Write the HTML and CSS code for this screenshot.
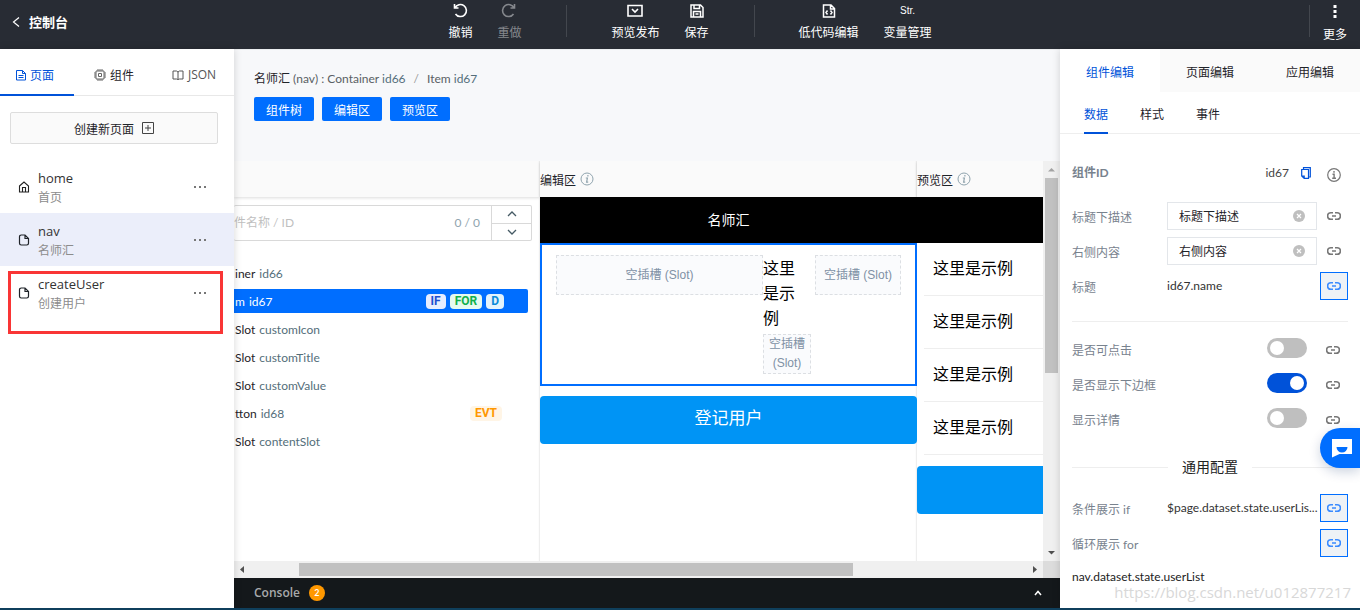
FILE: index.html
```html
<!DOCTYPE html>
<html lang="zh-CN">
<head>
<meta charset="utf-8">
<title>控制台</title>
<link rel="stylesheet" href="styles.css">
</head>
<body>
<svg class="defs" aria-hidden="true">
  <symbol id="link" viewBox="0 0 14 14"><path d="M6 3.800H3.800a3.200 3.200 0 0 0 0 6.400H6M8 3.800h2.200a3.200 3.200 0 0 1 0 6.400H8M5 7h4" fill="none" stroke="currentColor" stroke-width="1.500"/></symbol>
  <symbol id="info" viewBox="0 0 14 14"><circle cx="7" cy="7" r="6.300" fill="none" stroke="currentColor" stroke-width="1.200"/><path d="M7 3v1.700M5.500 6.300h1.600v4M5.200 10.300h3.800" fill="none" stroke="currentColor" stroke-width="1.400"/></symbol>
  <symbol id="info-thin" viewBox="0 0 14 14"><circle cx="7" cy="7" r="6" fill="none" stroke="currentColor"/><path d="M7.900 3v1.600M5.800 6h1.600l-.8 4.200h1.600" fill="none" stroke="currentColor" stroke-width="1.200"/></symbol>
  <symbol id="file" viewBox="0 0 12 12"><path d="M7 1H3.200A1.700 1.700 0 0 0 1.500 2.700v6.600A1.700 1.700 0 0 0 3.200 11h5.600a1.700 1.700 0 0 0 1.700-1.700V4.500zM7 1v3.500h3.500" fill="none" stroke="currentColor" stroke-width="1.200"/></symbol>
  <symbol id="clear" viewBox="0 0 12 12"><circle cx="6" cy="6" r="6" fill="#bfbfbf"/><path d="M4 4l4 4M8 4L4 8" stroke="#fff" stroke-width="1.200"/></symbol>
</svg>
<div class="app">
  <header class="topbar">
    <a class="back" href="#"><svg width="8" height="12" viewBox="0 0 8 12"><path d="M7 1.500L1.500 6 7 10.500" fill="none" stroke="#fff" stroke-width="1.200"/></svg>控制台</a>
    <div class="tools">
      <button class="tool"><svg width="16" height="16" viewBox="0 0 16 16"><path d="M2.500 1v4h4M3 5A6 6 0 1 1 3.500 11" fill="none" stroke="currentColor" stroke-width="1.600"/></svg>撤销</button>
      <button class="tool off"><svg width="16" height="16" viewBox="0 0 16 16"><path d="M13.500 1v4h-4M13 5A6 6 0 1 0 12.500 11" fill="none" stroke="currentColor" stroke-width="1.600"/></svg>重做</button>
      <span class="sep"></span>
      <button class="tool"><svg width="16" height="16" viewBox="0 0 16 16"><path d="M1 2.500h14v10.500H1zM5 6l3 3 3-3" fill="none" stroke="currentColor" stroke-width="1.600"/></svg>预览发布</button>
      <button class="tool"><svg width="16" height="16" viewBox="0 0 16 16"><path d="M2 2h9.500L14 4.500V14H2zM5 2v3.500h5.500V2M4.500 14V8.500h7V14M6.500 11h3" fill="none" stroke="currentColor" stroke-width="1.500"/></svg>保存</button>
      <span class="sep"></span>
      <button class="tool"><svg width="16" height="16" viewBox="0 0 16 16"><path d="M2.500 2h7.500l3.500 3.500V14h-11zM9.500 2v4h4M6.500 7.500L5 9.500l1.500 2M9.500 7.500l1.500 2-1.500 2" fill="none" stroke="currentColor" stroke-width="1.500"/></svg>低代码编辑</button>
      <button class="tool"><span class="str">Str.</span>变量管理</button>
    </div>
    <div class="more-wrap">
      <button class="tool more"><svg width="16" height="16" viewBox="0 0 16 16"><path d="M6.500 0h3v3h-3zM6.500 5h3v3h-3zM6.500 10h3v3h-3z" fill="currentColor"/></svg>更多</button>
    </div>
  </header>

  <div class="main">
    <aside class="left">
      <nav class="tabs">
        <button class="tab on"><svg width="10" height="12" viewBox="0 0 10 12"><path d="M.5 1.500h6L9.500 4.500v6.500h-9zM6.500 1.500v3h3M2.500 6.500h5M2.500 8.500h5" fill="none" stroke="currentColor"/></svg><span>页面</span></button>
        <button class="tab"><svg width="12" height="12" viewBox="0 0 12 12"><path d="M2 2h8v8H2zM4.500 4.500h3v3h-3zM4 0v2M6 0v2M8 0v2M4 10v2M6 10v2M8 10v2M0 4h2M0 6h2M0 8h2M10 4h2M10 6h2M10 8h2" fill="none" stroke="#666"/></svg><span>组件</span></button>
        <button class="tab dim"><svg width="12" height="12" viewBox="0 0 12 12"><path d="M1 2h3.500L6 3l1.500-1H11v8H7.500L6 10.500 4.500 10H1zM6 3v7.500" fill="none" stroke="#555"/></svg>JSON</button>
      </nav>
      <button class="create"><span>创建新页面</span><svg width="12" height="12" viewBox="0 0 12 12"><path d="M.5.5h11v11H.5zM6 3v6M3 6h6" fill="none" stroke="#444"/></svg></button>
      <ul class="pages">
        <li class="page"><svg width="12" height="12" viewBox="0 0 12 12"><path d="M1.500 5L6 1l4.500 4v6h-9zM4.500 11V6.500h3V11" fill="none" stroke="#222" stroke-width="1.100"/></svg><div class="page-text"><b>home</b><span>首页</span></div><button class="dots" aria-label="home"><svg width="14" height="4" viewBox="0 0 14 4"><path d="M1 1h2v2H1zM6 1h2v2H6zM11 1h2v2h-2z" fill="#777"/></svg></button></li>
        <li class="page sel"><svg width="12" height="12"><use href="#file"/></svg><div class="page-text"><b>nav</b><span>名师汇</span></div><button class="dots" aria-label="nav"><svg width="14" height="4" viewBox="0 0 14 4"><path d="M1 1h2v2H1zM6 1h2v2H6zM11 1h2v2h-2z" fill="#777"/></svg></button></li>
        <li class="page"><svg width="12" height="12"><use href="#file"/></svg><div class="page-text"><b>createUser</b><span>创建用户</span></div><button class="dots" aria-label="createUser"><svg width="14" height="4" viewBox="0 0 14 4"><path d="M1 1h2v2H1zM6 1h2v2H6zM11 1h2v2h-2z" fill="#777"/></svg></button><i class="mark"></i></li>
      </ul>
    </aside>

    <section class="center">
      <div class="intro">
        <div class="crumb"><span class="ink">名师汇</span> (nav) : Container <em>id66</em><i>/</i>Item <em>id67</em></div>
        <div class="jump"><button>组件树</button><button>编辑区</button><button>预览区</button></div>
      </div>
      <div class="work">
        <div class="canvas">
          <div class="pane tree">
            <div class="pane-head"></div>
            <div class="search">
              <input type="text" aria-label="ID" placeholder="件名称 / ID"><span class="count">0 / 0</span>
              <div class="step">
                <button aria-label="上"><svg width="10" height="6" viewBox="0 0 10 6"><path d="M1 5l4-4 4 4" fill="none" stroke="#455a64" stroke-width="1.300"/></svg></button>
                <button aria-label="下"><svg width="10" height="6" viewBox="0 0 10 6"><path d="M1 1l4 4 4-4" fill="none" stroke="#455a64" stroke-width="1.300"/></svg></button>
              </div>
            </div>
            <ul class="nodes">
              <li>iner <em>id66</em></li>
              <li class="on">m <em>id67</em><span class="tags"><b class="if">IF</b><b class="for">FOR</b><b class="d">D</b></span></li>
              <li>Slot <em>customIcon</em></li>
              <li>Slot <em>customTitle</em></li>
              <li>Slot <em>customValue</em></li>
              <li>tton <em>id68</em><span class="tags"><b class="evt">EVT</b></span></li>
              <li>Slot <em>contentSlot</em></li>
            </ul>
          </div>
          <div class="pane edit">
            <div class="pane-head"><span>编辑区</span><svg width="14" height="14"><use href="#info-thin"/></svg></div>
            <div class="phone-title">名师汇</div>
            <div class="cell">
              <div class="slot wide">空插槽 (Slot)</div>
              <div class="cell-mid"><p>这里是示例</p><div class="slot">空插槽 (Slot)</div></div>
              <div class="slot side">空插槽 (Slot)</div>
            </div>
            <button class="primary">登记用户</button>
          </div>
          <div class="pane preview">
            <div class="pane-head"><span>预览区</span><svg width="14" height="14"><use href="#info-thin"/></svg></div>
            <div class="phone-title"></div>
            <ul class="samples"><li>这里是示例</li><li>这里是示例</li><li>这里是示例</li><li>这里是示例</li></ul>
            <div class="primary"></div>
          </div>
        </div>
        <div class="vbar"><svg width="17" height="17" viewBox="0 0 17 17"><path d="M5 10.500h7L8.500 7z" fill="#a3a3a3"/></svg><i></i><svg width="17" height="17" viewBox="0 0 17 17"><path d="M5 7h7l-3.500 3.500z" fill="#505050"/></svg></div>
        <div class="hbar"><svg width="17" height="17" viewBox="0 0 17 17"><path d="M10 5v7L6 8.500z" fill="#505050"/></svg><i></i><svg width="17" height="17" viewBox="0 0 17 17"><path d="M7 5v7l4-3.500z" fill="#505050"/></svg></div>
        <div class="corner"></div>
      </div>
      <div class="console"><b>Console</b><span class="badge">2</span><svg width="8" height="6" viewBox="0 0 8 6"><path d="M1 5l3-3.500L7 5" fill="none" stroke="#fff" stroke-width="1.500"/></svg></div>
    </section>

    <aside class="right">
      <nav class="rtabs"><button class="on">组件编辑</button><button>页面编辑</button><button>应用编辑</button></nav>
      <nav class="stabs"><button class="on">数据</button><button>样式</button><button>事件</button></nav>
      <div class="form">
        <div class="row idrow"><b>组件ID</b><span class="idval">id67</span><svg class="copy" width="10" height="12" viewBox="0 0 10 12"><path d="M2.500 2.500V.7h6.800v9.300H7.500M.7 2.500h6.800v8.800H3.200L.7 9zM.7 9h2.500v2.300" fill="none" stroke="#0052d9" stroke-width="1.200"/></svg><span class="lk"><svg width="14" height="14"><use href="#info"/></svg></span></div>
        <div class="row"><label for="desc">标题下描述</label><div class="field"><input id="desc" type="text" value="标题下描述"><svg width="12" height="12"><use href="#clear"/></svg></div><button class="lk" aria-label="标题下描述"><svg width="14" height="14"><use href="#link"/></svg></button></div>
        <div class="row"><label for="rightc">右侧内容</label><div class="field"><input id="rightc" type="text" value="右侧内容"><svg width="12" height="12"><use href="#clear"/></svg></div><button class="lk" aria-label="右侧内容"><svg width="14" height="14"><use href="#link"/></svg></button></div>
        <div class="row"><span class="lab">标题</span><span class="val">id67.name</span><button class="lk act" aria-label="标题"><svg width="14" height="14"><use href="#link"/></svg></button></div>
        <hr>
        <div class="row sw"><label for="s1">是否可点击</label><input id="s1" type="checkbox"><button class="lk" aria-label="是否可点击"><svg width="14" height="14"><use href="#link"/></svg></button></div>
        <div class="row sw"><label for="s2">是否显示下边框</label><input id="s2" type="checkbox" checked><button class="lk" aria-label="是否显示下边框"><svg width="14" height="14"><use href="#link"/></svg></button></div>
        <div class="row sw"><label for="s3">显示详情</label><input id="s3" type="checkbox"><button class="lk" aria-label="显示详情"><svg width="14" height="14"><use href="#link"/></svg></button></div>
        <div class="rule">通用配置</div>
        <div class="row"><span class="lab">条件展示 if</span><span class="val">$page.dataset.state.userLis...</span><button class="lk act" aria-label="if"><svg width="14" height="14"><use href="#link"/></svg></button></div>
        <div class="row"><span class="lab">循环展示 for</span><span class="val"></span><button class="lk act" aria-label="for"><svg width="14" height="14"><use href="#link"/></svg></button></div>
        <div class="expr">nav.dataset.state.userList</div>
      </div>
    </aside>
  </div>
  <div class="strip"></div>
  <button class="fab" aria-label="消息"><svg width="20" height="20" viewBox="0 0 20 20"><path d="M0 1h20v15H7.500L0 19.500zM4.500 9a5.500 5.500 0 0 0 11 0z" fill="#fff" fill-rule="evenodd"/></svg></button>
  <div class="watermark">https://blog.csdn.net/u012877217</div>
</div>
</body>
</html>
```
FILE: styles.css
```css
* { box-sizing: border-box; }
body, ul, p { margin: 0; padding: 0; }
ul { list-style: none; }
em, i { font-style: normal; }
body, button, input { font-family: Lato, "Noto Sans CJK SC", sans-serif; font-size: 12px; line-height: 18px; color: #1f2329; }
button { border: 0; background: none; padding: 0; }
svg { flex: none; display: block; }
.defs { display: none; }

.app { position: relative; display: flex; flex-direction: column; height: 100vh; overflow: hidden; background: #fff; }
.main { flex: 1; min-height: 0; display: flex; }
.strip { height: 2px; background: #0f3f5c; position: relative; z-index: 3; }

.topbar { height: 49px; background: #282c34; display: flex; color: #fff; flex: none; }
.back { flex: 1; display: flex; align-items: center; gap: 9px; height: 44px; padding-left: 12px; color: #fff; font-size: 13px; font-weight: bold; text-decoration: none; }
.tools { display: flex; gap: 25px; margin-left: 8px; }
.tool { color: #fff; display: flex; flex-direction: column; align-items: center; gap: 5px; padding-top: 3px; height: 44px; }
.tool.off { color: #85888d; }
.str { height: 16px; font: 10px/16px "Liberation Sans", sans-serif; }
.sep { width: 1px; height: 32px; margin: 5px 19px 0 20px; background: #43474e; }
.more-wrap { flex: 1; display: flex; justify-content: flex-end; }
.more { width: 51px; height: 32px; margin-top: 5px; padding-top: 0; border-left: 1px solid #43474e; }

.left { position: relative; z-index: 2; flex: 0 0 234px; background: #fff; box-shadow: 0 0 8px rgba(0, 0, 0, .16); }
.tabs { display: flex; height: 47px; border-bottom: 1px solid #e8e8e8; }
.tab { flex: 1; display: flex; align-items: center; justify-content: center; gap: 4px; height: 47px; padding-top: 6px; border-bottom: 2px solid transparent; }
.tab span { padding-top: 2px; }
.tab.on { flex: 0 0 74px; padding-right: 4px; color: #0052d9; border-color: #0052d9; }
.tab.dim { color: #555; font-family: "Open Sans", sans-serif; }
.create { display: flex; align-items: center; justify-content: center; gap: 8px; width: 208px; height: 32px; margin: 16px 10px; background: #fafafa; border: 1px solid #ddd; border-radius: 2px; }
.create span { padding-top: 3px; }
.page { position: relative; display: flex; align-items: center; gap: 8px; height: 53px; padding: 0 27px 0 18px; }
.page.sel { background: #ebeefa; }
.page-text { flex: 1; display: flex; flex-direction: column; padding-top: 3px; }
.page-text b { font-family: "Open Sans", sans-serif; font-size: 13px; line-height: 20px; font-weight: 500; color: #333; }
.page-text span { line-height: 20px; color: #8c8c8c; }
.mark { position: absolute; left: 8px; right: 11px; top: 5px; height: 63px; border: 3px solid #f93535; }

.center { flex: 1; min-width: 0; display: flex; flex-direction: column; background: #f7f8fa; }
.intro { height: 112px; flex: none; padding: 20px 20px 0; border-top: 1px solid #eceef0; }
.crumb { color: #5a5f64; white-space: nowrap; }
.crumb em { color: #546e7a; }
.crumb i { margin: 0 8px; color: #999; }
.ink { color: #1f2329; }
.jump { display: flex; gap: 8px; margin-top: 9px; }
.jump button { width: 60px; height: 24px; padding-top: 4px; background: #006eff; color: #fff; border-radius: 2px; }

.work { flex: 1; min-height: 0; display: grid; grid-template: minmax(0, 1fr) 17px / minmax(0, 1fr) 17px; background: #fff; }
.canvas { display: flex; overflow: hidden; }
.pane { flex: 0 0 377px; box-shadow: -1px 0 1px #eee; }
.pane.tree { flex-basis: 306px; }
.pane-head { display: flex; align-items: center; gap: 4px; height: 36px; background: #fafafa; box-shadow: 0 1px 3px rgba(0, 0, 0, .14); }
.pane-head span { padding-top: 3px; }
.pane-head svg { color: #90a4ae; }
.search { display: flex; align-items: center; height: 36px; margin: 8px 8px 0 0; border: 1px solid #d9d9d9; border-left: 0; border-radius: 2px; }
.search input { flex: 1; min-width: 0; border: 0; outline: 0; padding: 0; background: none; }
.search input::placeholder { color: #bfbfbf; opacity: 1; }
.count { color: #90a4ae; margin-right: 11px; }
.step { width: 40px; height: 34px; display: flex; flex-direction: column; border-left: 1px solid #d9d9d9; }
.step button { flex: 1; display: flex; align-items: center; justify-content: center; }
.step button + button { border-top: 1px solid #d9d9d9; }
.nodes { display: flex; flex-direction: column; gap: 4px; margin: 20px 12px 0 0; }
.nodes li { display: flex; align-items: center; gap: 4px; height: 24px; padding: 1px 0 0 1px; }
.nodes em { color: #546e7a; }
.nodes .on, .nodes .on em { background: #006eff; color: #fff; border-radius: 0 2px 2px 0; }
.tags { display: flex; gap: 4px; margin-left: auto; margin-right: 24px; }
.tags b { padding: 0 5px; line-height: 15px; border-radius: 4px; font-family: Roboto, sans-serif; }
.if { background: #e6edff; color: #1d4fd0; }
.for { background: #e6faef; color: #10b04c; }
.d { background: #e3f3fc; color: #0a8ad8; }
.tags .evt { margin-right: 2px; background: #fff5e6; color: #ff9800; }

.phone-title { position: relative; height: 46px; background: #000; color: #fff; font-size: 14px; line-height: 46px; text-align: center; }
.cell, .edit .primary { position: relative; }
.cell { display: flex; align-items: flex-start; min-height: 143px; border: 2px solid #006eff; padding: 10px 14px; color: #000; }
.cell-mid { width: 48px; margin-right: 4px; }
.cell-mid p { width: 32px; margin-bottom: 4px; font-size: 16px; line-height: 25px; }
.slot { display: flex; align-items: center; justify-content: center; text-align: center; min-height: 40px; border: 1px dashed #dcdfe3; background: #fafbfd; color: #8091a5; font: 12px/19px "Liberation Sans", "Noto Sans CJK SC", sans-serif; }
.slot.wide { flex: 1; }
.slot.side { width: 86px; }
.primary { display: block; width: 100%; height: 48px; margin-top: 10px; padding-bottom: 4px; border-radius: 4px; background: #0094f5; color: #fff; font-size: 17px; }
.samples { padding-bottom: 1px; }
.samples li { height: 53px; margin-left: 7px; padding: 12px 9px; border-bottom: 1px solid #eee; font-size: 16px; line-height: 25px; color: #000; }

.vbar { display: flex; flex-direction: column; background: #f0f0f0; }
.vbar i { width: 13px; height: 195px; margin: 0 auto auto; background: #c1c1c1; }
.hbar { display: flex; background: #f0f0f0; }
.hbar i { width: 554px; height: 13px; margin: 2px auto 2px 48px; background: #c1c1c1; }
.corner { background: #dcdcdc; }
.console { display: flex; align-items: center; gap: 9px; height: 30px; flex: none; padding: 0 18px 0 20px; background: #14181b; }
.console b { color: #a8aaab; font-family: "Open Sans", sans-serif; font-weight: 600; }
.console > svg { margin-left: auto; }
.badge { width: 16px; height: 16px; border-radius: 8px; background: #ff9800; color: #fff; font-size: 9px; line-height: 16px; font-weight: 600; text-align: center; }

.right { position: relative; z-index: 2; flex: 0 0 300px; min-width: 0; background: #fff; box-shadow: 0 0 8px rgba(0, 0, 0, .16); }
.rtabs { display: flex; height: 43px; }
.rtabs button { flex: 1; padding-top: 4px; background: #fafafa; }
.rtabs .on { background: #fff; color: #0052d9; }
.stabs { display: flex; gap: 32px; height: 42px; padding-left: 24px; border-bottom: 1px solid #eee; }
.stabs button { height: 42px; padding-top: 5px; border-bottom: 2px solid transparent; }
.stabs .on { color: #0052d9; border-color: #0052d9; }
.form { padding: 25px 12px 0; color: #222; }
.row { display: flex; align-items: center; height: 28px; margin-bottom: 7px; color: #78828e; }
.idrow { margin-bottom: 15px; }
.idrow b { flex: 1; }
.idval { color: #444; margin-right: 12px; }
.copy { margin-right: 9px; }
.row label, .lab { width: 95px; flex: none; padding-top: 3px; }
.field { flex: 1; min-width: 0; display: flex; align-items: center; height: 28px; padding: 0 11px; border: 1px solid #e3e6ea; }
.field input { flex: 1; min-width: 0; padding: 2px 0 0; border: 0; outline: 0; }
.val { flex: 1; min-width: 0; color: #333; white-space: nowrap; }
.lk { display: flex; flex: none; align-items: center; justify-content: center; width: 28px; height: 28px; margin-left: 3px; color: #777; }
.idrow .lk { margin-left: 0; padding-top: 4px; }
.act { border: 1px solid #006eff; background: #eef2f6; color: #3a8bff; }
hr { margin: 21px 0 12px; border: 0; border-top: 1px solid #eee; }
.row.sw label { flex: 1; padding-top: 5px; }
.sw input { appearance: none; width: 40px; height: 20px; margin: 0 12px 0 0; border-radius: 10px; background: #bfbfbf; }
.sw input::before { content: ""; display: block; width: 14px; height: 14px; margin: 3px; border-radius: 50%; background: #fff; }
.sw input:checked { background: #0052d9; }
.sw input:checked::before { margin-left: 23px; }
.sw .lk { margin: 0 1px 0 0; padding-top: 4px; }
.rule { display: flex; align-items: center; gap: 14px; margin: 23px 0 15px; font-size: 14px; line-height: 24px; }
.rule::before, .rule::after { content: ""; flex: 1; border-top: 1px solid #eee; }
.expr { margin-top: 11px; }
.fab { position: absolute; z-index: 3; right: 0; bottom: 142px; width: 40px; height: 40px; padding-left: 12px; border-radius: 20px 0 0 20px; background: #006eff; box-shadow: 0 4px 12px rgba(0, 40, 100, .2); }
.watermark { position: absolute; z-index: 3; right: 9px; bottom: 8px; font-family: "Open Sans", sans-serif; font-size: 15px; line-height: 20px; color: #d8d8d8; }
```
